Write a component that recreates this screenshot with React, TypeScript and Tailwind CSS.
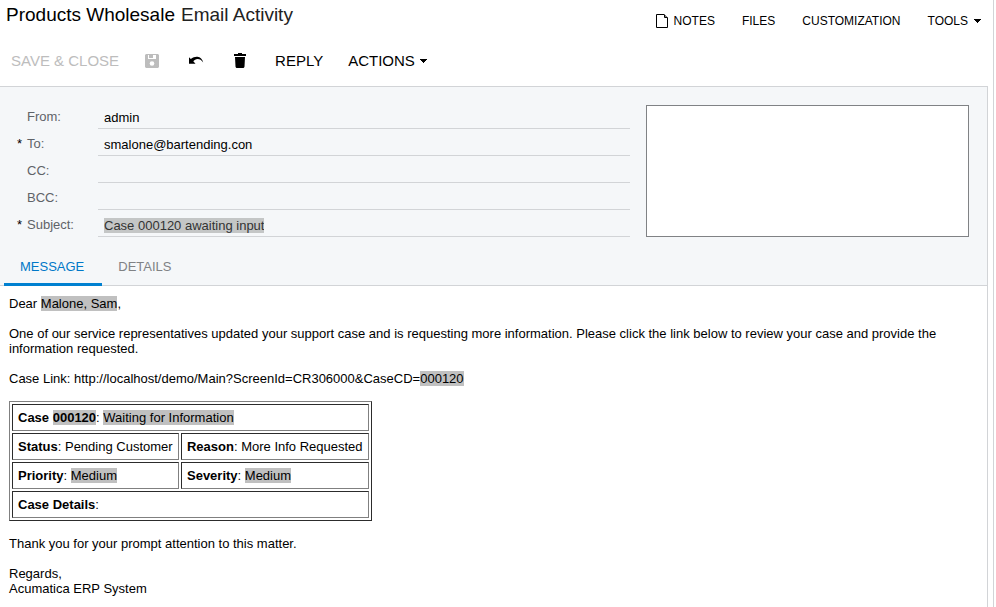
import type { ReactNode } from "react";

type Field = {
  id: string;
  label: string;
  value: string;
  required?: boolean;
  marked?: boolean;
};

const fields: Field[] = [
  { id: "from", label: "From:", value: "admin" },
  { id: "to", label: "To:", value: "smalone@bartending.con", required: true },
  { id: "cc", label: "CC:", value: "" },
  { id: "bcc", label: "BCC:", value: "" },
  { id: "subject", label: "Subject:", value: "Case 000120 awaiting input", required: true, marked: true },
];

const cellClass =
  "border border-t-[#2c2c2c] border-l-[#2c2c2c] border-b-[#808080] border-r-[#808080] p-[5px] text-left font-normal";

function Mark({ children }: { children: ReactNode }) {
  return <span className="bg-[#c0c0c0]">{children}</span>;
}

function Caret() {
  return (
    <svg width="7" height="4" viewBox="0 0 7 4" fill="currentColor" shapeRendering="crispEdges" aria-hidden="true">
      <path d="M0 0h7v1H0zM1 1h5v1H1zM2 2h3v1H2zM3 3h1v1H3z" />
    </svg>
  );
}

function SaveIcon() {
  return (
    <svg width="14" height="14" viewBox="0 0 14 14" fill="currentColor" aria-hidden="true">
      <path d="M1 0h12l1 1v12l-1 1H1l-1-1V1z" />
      <path d="M3 1h8v4H3z" fill="#fff" />
      <path d="M4 1h4v3H4z" />
      <circle cx="7" cy="9.500" r="2.300" fill="#fff" />
    </svg>
  );
}

function UndoIcon() {
  return (
    <svg width="16" height="9" viewBox="0 0 16 9" fill="currentColor" aria-hidden="true">
      <path d="M1 1.200 2.800 3C5 1.200 7.200.5 9.400.7c3 .3 5 2.200 5.800 5.800C13.500 4 11.800 3 9.600 3 7.800 3 6.200 4 5.300 5.300L7.500 7.800H1z" />
    </svg>
  );
}

function TrashIcon() {
  return (
    <svg width="12" height="15" viewBox="0 0 12 15" fill="currentColor" aria-hidden="true">
      <path d="M4 0h4v1h4v2H0V1h4zM1 4h10l-.5 9.500c0 .8-.7 1.500-1.500 1.500H3c-.8 0-1.500-.7-1.500-1.500z" />
    </svg>
  );
}

function NoteIcon() {
  return (
    <svg width="12" height="14" viewBox="0 0 12 14" fill="none" stroke="currentColor" aria-hidden="true">
      <path d="M.5.5h7.500l3.500 3.500v9.500H.5zM8.500.5v3h3" />
    </svg>
  );
}

export default function App() {
  return (
    <div className="flex min-h-screen bg-white font-['Liberation_Sans',Arial,sans-serif] text-[13px] leading-[15px] text-black">
      <div className="flex min-w-0 flex-1 flex-col">
        <header className="flex items-start justify-between pl-[6px] pr-3">
          <h1 className="flex gap-[6px] pt-1 text-[19px] leading-[22px]">
            <span>Products Wholesale</span>
            <span className="text-[#222]">Email Activity</span>
          </h1>
          <nav className="flex gap-[27px] pt-[13px] text-[12px] leading-4">
            <button className="flex items-center gap-[6px]">
              <NoteIcon />
              NOTES
            </button>
            <button>FILES</button>
            <button>CUSTOMIZATION</button>
            <button className="flex items-center gap-[6px]">
              TOOLS
              <Caret />
            </button>
          </nav>
        </header>

        <div className="flex h-[57px] items-center pt-[6px] pl-[11px] text-[15px]" role="toolbar">
          <button className="text-[#bdbdbd]" disabled>SAVE &amp; CLOSE</button>
          <button className="ml-[26px] text-[#bdbdbd]" aria-label="Save" disabled>
            <SaveIcon />
          </button>
          <button className="ml-[29px]" aria-label="Undo">
            <UndoIcon />
          </button>
          <button className="ml-[30px]" aria-label="Delete">
            <TrashIcon />
          </button>
          <button className="ml-[29px]">REPLY</button>
          <button className="ml-[25px] flex items-center gap-[5px]">
            ACTIONS
            <Caret />
          </button>
        </div>

        <main className="mr-[5px] flex flex-1 flex-col border-t border-r border-[#d2d4d7]">
          <section className="border-b border-[#d2d4d7] bg-[#f5f7f9]">
            <div className="flex gap-4 pt-[15px] pr-[18px]">
              <div className="flex-1">
                {fields.map((f) => (
                  <div key={f.id} className="flex">
                    <span className="w-[27px] shrink-0 pt-[7px] pl-[17px]">{f.required ? "*" : ""}</span>
                    <label htmlFor={f.id} className="w-[71px] shrink-0 pt-[7px] text-[#5f6368]">
                      {f.label}
                    </label>
                    <div className="flex h-[27px] flex-1 border-b border-[#d2d4d7] px-[6px] pt-2 pb-[3px]">
                      <input
                        id={f.id}
                        defaultValue={f.value}
                        className={f.marked ? "field-sizing-content bg-[#c4c6c6] text-[#333] outline-none" : "w-full outline-none"}
                      />
                    </div>
                  </div>
                ))}
              </div>
              <textarea
                aria-label="Notes"
                className="mt-[3px] h-[132px] w-[323px] resize-none border border-[#808285] bg-white outline-none"
              />
            </div>
            <div className="-mb-px flex pt-[10px] pl-1" role="tablist">
              <button role="tab" aria-selected="true" className="border-b-3 border-[#0080d0] pt-3 pr-[18px] pb-[9px] pl-4 text-[#0078c8]">
                MESSAGE
              </button>
              <button role="tab" aria-selected="false" className="border-b-3 border-transparent pt-3 pr-[18px] pb-[9px] pl-4 text-[#808285]">
                DETAILS
              </button>
            </div>
          </section>

          <article className="flex flex-col items-start gap-[15px] py-[10px] pl-[9px] pr-4">
            <p>
              Dear <Mark>Malone, Sam</Mark>,
            </p>
            <p>
              One of our service representatives updated your support case and is requesting more information. Please
              click the link below to review your case and provide the information requested.
            </p>
            <p>
              Case Link: http://localhost/demo/Main?ScreenId=CR306000&amp;CaseCD=<Mark>000120</Mark>
            </p>
            <table className="w-[363px] border-separate border-spacing-[2px] border border-t-[#808080] border-l-[#808080] border-b-[#2c2c2c] border-r-[#2c2c2c]">
              <tbody>
                <tr>
                  <td className={cellClass} colSpan={2}>
                    <b>Case <Mark>000120</Mark></b>: <Mark>Waiting for Information</Mark>
                  </td>
                </tr>
                <tr>
                  <td className={cellClass}><b>Status</b>: Pending Customer</td>
                  <td className={cellClass}><b>Reason</b>: More Info Requested</td>
                </tr>
                <tr>
                  <td className={cellClass}><b>Priority</b>: <Mark>Medium</Mark></td>
                  <td className={cellClass}><b>Severity</b>: <Mark>Medium</Mark></td>
                </tr>
                <tr>
                  <td className={cellClass} colSpan={2}><b>Case Details</b>:</td>
                </tr>
              </tbody>
            </table>
            <p>Thank you for your prompt attention to this matter.</p>
            <p>
              Regards,
              <br />
              Acumatica ERP System
            </p>
          </article>
        </main>
      </div>
      <div className="w-[3px] border-l border-[#d2d4d7]" />
    </div>
  );
}
